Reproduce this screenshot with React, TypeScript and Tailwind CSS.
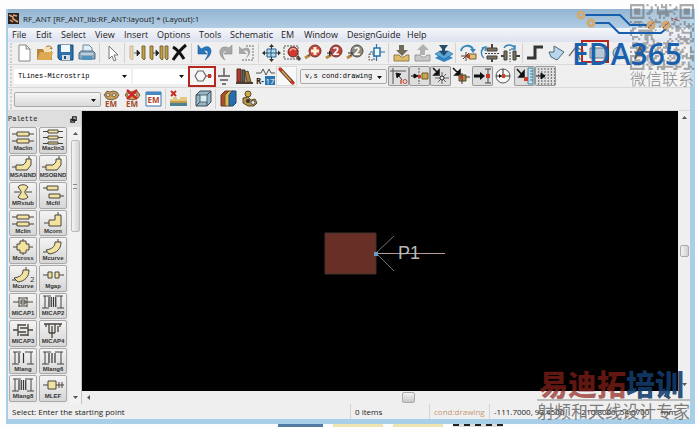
import type { ReactNode } from "react";
import clsx from "clsx";

interface IconItem {
  name: string;
  icon: ReactNode;
}

const menus = [
  { name: "File", width: "w-6" },
  { name: "Edit", width: "w-[25px]" },
  { name: "Select", width: "w-[34px]" },
  { name: "View", width: "w-[29px]" },
  { name: "Insert", width: "w-[33px]" },
  { name: "Options", width: "w-[42px]" },
  { name: "Tools", width: "w-[31px]" },
  { name: "Schematic", width: "w-[51px]" },
  { name: "EM", width: "w-[23px]" },
  { name: "Window", width: "w-[43px]" },
  { name: "DesignGuide", width: "w-[60px]" },
  { name: "Help", width: "w-6" },
];

const magnifier = (
  <>
    <path d="M7 12L2 15" stroke="#b98a3e" strokeWidth="3" />
    <path d="M8 11L5 13" stroke="#444" />
  </>
);

const gear = (
  <g fill="#c99f58" stroke="#5b4a2c" strokeWidth="0.8">
    <path d="M3 6l3-4 3 1 3-1 4 1 2 3-2 3-5 2-5-1z" />
    <ellipse cx="7" cy="6" rx="2" ry="1.4" fill="#eee" />
    <ellipse cx="13" cy="6" rx="2" ry="1.4" fill="#eee" />
  </g>
);

const emText = (
  <text x="10" y="18" textAnchor="middle" fontSize="8" fontWeight="bold" fill="#a34a2a">
    EM
  </text>
);

const mainTools: IconItem[][] = [
  [
    { name: "New", icon: <path d="M5 2h7l4 4v12H5zM12 2v4h4" fill="#fff" stroke="#888" /> },
    {
      name: "Open",
      icon: (
        <>
          <path d="M2 6h6l1 2h8v9H2z" fill="#b98239" />
          <path d="M9 4h7v7H9z" fill="#f3e2b5" />
          <path d="M2 17l3-8h13l-2 8z" fill="#dda955" />
          <path d="M11 4c2-2 6-1 6 2l-2-1" fill="none" stroke="#a5662a" />
        </>
      ),
    },
    {
      name: "Save",
      icon: (
        <>
          <path d="M2 2h15v15H4l-2-2z" fill="#2d72ac" stroke="#164a79" />
          <path d="M5 2h9v7H5z" fill="#f5f8fb" />
          <path d="M6 12h8v5H6z" fill="#d8dee3" />
          <path d="M8 13h2v3H8z" fill="#284d70" />
        </>
      ),
    },
    {
      name: "Print",
      icon: (
        <>
          <path d="M6 2h6l3 3v5H6z" fill="#e3eff7" stroke="#71899b" />
          <path d="M2 10l2-2h12l2 2v6H2z" fill="#8ea9bd" stroke="#566d80" />
          <path d="M5 13h10v4H5z" fill="#4f94bc" />
          <path d="M4 11h12" stroke="#edf5fa" />
        </>
      ),
    },
  ],
  [
    { name: "Select", icon: <path d="M7 3v13l3-3 2 5 2-1-2-5h4z" fill="#fff" stroke="#777" /> },
  ],
  [
    {
      name: "Move edge",
      icon: (
        <>
          <path d="M3 3h3v13l-1 1-2-2z" fill="#e9d7b2" stroke="#b7a98a" strokeWidth="0.8" />
          <path d="M15 3h3v13l-1 1-2-2z" fill="#c4a044" stroke="#655326" strokeWidth="0.8" />
          <path d="M7 10h3M10 7l3 3-3 3z" fill="#222" stroke="#222" strokeWidth="0.7" />
        </>
      ),
    },
    {
      name: "Copy",
      icon: (
        <>
          <path d="M2 3h3v13l-1 1-2-2zM12 3h3v13l-1 1-2-2zM17 3h3v13l-1 1-2-2z" fill="#c4a044" stroke="#655326" strokeWidth="0.8" />
          <path d="M5 10h3M8 7l3 3-3 3z" fill="#222" stroke="#222" strokeWidth="0.7" />
        </>
      ),
    },
    { name: "Delete", icon: <path d="M4 4c5 3 8 7 11 12M17 2C12 6 8 11 4 17" stroke="#111" strokeWidth="3" fill="none" /> },
  ],
  [
    { name: "Undo", icon: <path d="M4 2v9h9l-3-3c4-2 6 3 1 9 9-6 7-15 0-13L7 6z" fill="#2576bd" stroke="#1b5c98" strokeWidth="0.6" /> },
    { name: "Redo", icon: <path d="M17 2v9H9l3-3C8 7 6 11 10 17 2 12 4 3 11 4l3 1z" fill="#a9a9a9" stroke="#8c8c8c" strokeWidth="0.6" /> },
    {
      name: "Undo all",
      icon: (
        <>
          <path d="M3 3v8h8L8 8c4-2 6 3 1 8 8-5 6-13 0-11L6 6z" fill="#a6a6a6" />
          <path d="M10 3h7v14H5" fill="none" stroke="#999" strokeWidth="1.4" strokeDasharray="2 1" />
        </>
      ),
    },
  ],
  [
    {
      name: "View all",
      icon: (
        <>
          <path d="M6 6h9v8H6z" fill="#b7d9ec" stroke="#245f8b" />
          <path d="M10 6v8M6 10h9" stroke="#245f8b" />
          <path d="M10.500 1l2.500 3H8zM10.500 19l2.500-3H8zM1 10l3-2.500v5zM20 10l-3-2.500v5z" fill="#333" />
          <path d="M10.500 3v3M10.500 14v3M3 10h3M15 10h3" stroke="#333" />
        </>
      ),
    },
    {
      name: "Zoom area",
      icon: (
        <>
          <path d="M2 3h14v13H2z" fill="none" stroke="#555" strokeDasharray="2 1" />
          <circle cx="11" cy="9" r="5" fill="#cf392e" stroke="#672822" />
          <path d="M8 8c1-3 4-3 6-1" stroke="#f4b1a2" strokeWidth="1.5" fill="none" />
          <path d="M15 13l3 4" stroke="#594c42" strokeWidth="3" />
        </>
      ),
    },
    {
      name: "Zoom in",
      icon: (
        <>
          {magnifier}
          <circle cx="12" cy="8" r="6" fill="#c7463d" stroke="#72352f" />
          <path d="M12 4v8M8 8h8" stroke="#fff2d5" strokeWidth="3" />
        </>
      ),
    },
    {
      name: "Zoom in 2x",
      icon: (
        <>
          {magnifier}
          <circle cx="12" cy="8" r="6" fill="#b34642" stroke="#72352f" />
          <text x="12" y="12" textAnchor="middle" fontSize="11" fontWeight="bold" fill="#fff">2</text>
          <path d="M3 10h5M5.500 8v4" stroke="#222" />
        </>
      ),
    },
    {
      name: "Zoom out 2x",
      icon: (
        <>
          {magnifier}
          <circle cx="12" cy="8" r="6" fill="#8e8d7d" stroke="#4c4c45" />
          <text x="12" y="12" textAnchor="middle" fontSize="11" fontWeight="bold" fill="#fff">2</text>
          <path d="M3 10h5" stroke="#222" />
        </>
      ),
    },
    {
      name: "Pan",
      icon: (
        <>
          <path d="M3 11h5v6H3z" fill="none" stroke="#555" strokeDasharray="2 1" />
          <path d="M10.500 1v17M4 9h15" stroke="#2974a8" strokeWidth="1.2" />
          <path d="M8 5h6v8H8z" fill="#eef7fc" stroke="#2974a8" strokeWidth="1.5" />
        </>
      ),
    },
  ],
  [
    {
      name: "Push in",
      icon: (
        <>
          <path d="M3 12h5l2 2h3l2-2h3v6H3z" fill="#dfbd68" stroke="#7e6835" strokeWidth="0.8" />
          <path d="M8 2h5v5h4l-6 6-6-6h3z" fill="#716b5a" />
        </>
      ),
    },
    {
      name: "Pop out",
      icon: (
        <>
          <path d="M8 12h5V7h4l-6-6-6 6h3z" fill="#b1b1b1" />
          <path d="M3 12h5l2 2h3l2-2h3v6H3z" fill="#c8c8c8" stroke="#8c8c8c" strokeWidth="0.8" />
        </>
      ),
    },
    {
      name: "Layers",
      icon: (
        <>
          <path d="M2 15l5-3h8l5 3-9 4z" fill="#3385c6" />
          <path d="M2 11l5-3h8l5 3-9 5z" fill="#5da6da" stroke="#286d9f" strokeWidth="0.7" />
          <path d="M6 2h9l-3 4v2h3l-4 5-5-5h3V6z" fill="#254d6d" />
        </>
      ),
    },
  ],
  [
    {
      name: "Rotate",
      icon: (
        <>
          <path d="M3 8C4 2 12 1 15 6" fill="none" stroke="#3787bb" strokeWidth="2" />
          <path d="M12 6h6l-3 4z" fill="#3787bb" />
          <path d="M3 13h7M8 9v9M5 16l6-6" stroke="#4b4030" />
          <path d="M11 11h7v5h-7z" fill="#dec078" stroke="#74602f" />
          <path d="M9 12h3v3H9z" fill="#c63a27" />
        </>
      ),
    },
    {
      name: "Mirror vertical",
      icon: (
        <>
          <path d="M5 5C1 7 2 13 5 15M3 5l4-1-1 4" fill="none" stroke="#3787bb" strokeWidth="1.4" />
          <path d="M8 5h10v3H8zM8 13h10v3H8z" fill="#777263" stroke="#454138" />
          <path d="M13 1v4M13 16v3" stroke="#444" strokeWidth="2" />
          <path d="M6 10.500h14" stroke="#444" strokeDasharray="2 1" />
        </>
      ),
    },
    {
      name: "Mirror horizontal",
      icon: (
        <>
          <path d="M4 5c2-4 8-4 11 0M15 2v4h-4" fill="none" stroke="#3787bb" strokeWidth="1.4" />
          <path d="M4 8h3v9H4zM13 8h3v9h-3z" fill="#777263" stroke="#454138" />
          <path d="M1 13h3M16 13h4" stroke="#444" strokeWidth="2" />
          <path d="M10 6v13" stroke="#444" strokeDasharray="2 1" />
        </>
      ),
    },
  ],
  [
    { name: "Trace", icon: <path d="M2 15h8V4h8" fill="none" stroke="#353535" strokeWidth="3" /> },
    { name: "Polygon", icon: <path d="M3 9h5V3l10 6-7 8-6-3z" fill="#b8d7ed" stroke="#4f6779" /> },
    { name: "Polyline", icon: <path d="M2 13l7-9 7 4-5 3 2 6" fill="none" stroke="#777" strokeWidth="1.4" /> },
    { name: "Rectangle", icon: <path d="M2 5h15v10H2z" fill="#b7c9d5" stroke="#6d7b84" /> },
    { name: "Circle", icon: <circle cx="10" cy="10" r="6" fill="#b9cfdf" stroke="#5c6b76" /> },
    { name: "Text", icon: <path d="M5 16l5-12 5 12M7 12h6" fill="none" stroke="#333" strokeWidth="2" /> },
  ],
];

const snapTools: (IconItem & { pressed: boolean })[] = [
  {
    name: "Snap origin",
    pressed: true,
    icon: (
      <>
        <path d="M2 5h16M5 2v16" stroke="#555" />
        <path d="M8 7l5 1-4 4zM11 10l3 4" fill="#111" stroke="#111" strokeWidth="0.8" />
        <path d="M13 14v4" stroke="#c9482c" strokeWidth="1.4" />
        <circle cx="17" cy="15.500" r="2" fill="none" stroke="#c9482c" />
      </>
    ),
  },
  {
    name: "Snap to pin",
    pressed: true,
    icon: (
      <>
        <path d="M10 2v16" stroke="#555" strokeDasharray="2 1" />
        <path d="M2 10h4M5 8l4 2-4 2z" fill="#111" stroke="#111" />
        <path d="M13 7h6v6h-6z" fill="#c5a84d" stroke="#6d5a23" />
        <path d="M9 9h3v3H9z" fill="#d43c26" />
      </>
    ),
  },
  {
    name: "Snap to vertex",
    pressed: true,
    icon: (
      <>
        <path d="M3 2l5 5M9 4v5H4z" fill="#111" stroke="#111" strokeWidth="1.5" />
        <path d="M12 6v12M5 12h14M8 16l8-8M8 8l8 8" stroke="#444" strokeWidth="0.8" />
        <circle cx="12" cy="12" r="2" fill="#fff" stroke="#222" />
      </>
    ),
  },
  {
    name: "Snap to center",
    pressed: false,
    icon: (
      <>
        <path d="M2 2l6 6M9 4v5H4z" fill="#111" stroke="#111" strokeWidth="1.5" />
        <path d="M8 9h7v6H8z" fill="#a58b45" stroke="#564923" />
        <path d="M11 7v11M15 11h4" stroke="#333" />
        <path d="M9 10h3v3H9z" fill="#c73928" />
      </>
    ),
  },
  {
    name: "Snap to edge",
    pressed: true,
    icon: (
      <>
        <path d="M2 10h7" stroke="#111" strokeWidth="3" />
        <path d="M8 6l5 4-5 4z" fill="#111" />
        <path d="M16 3v14M13 3h6M13 17h6" stroke="#444" />
        <path d="M14 8h4v4h-4z" fill="#c73928" />
      </>
    ),
  },
  {
    name: "Snap to circle",
    pressed: false,
    icon: (
      <>
        <circle cx="10" cy="10" r="7" fill="#f7f7f7" stroke="#555" />
        <path d="M10 3v8M3 10h14" stroke="#333" />
        <path d="M9 8h3v4H9z" fill="#d43c26" />
        <path d="M6 8l3 2-3 2z" fill="#111" />
      </>
    ),
  },
  {
    name: "Snap to ruler",
    pressed: true,
    icon: (
      <>
        <path d="M14 2h5v16h-5z" fill="#c6e1ed" stroke="#4285a5" />
        <path d="M16 5h3M16 8h3M16 11h3M16 14h3" stroke="#34799d" />
        <path d="M3 3l6 7M10 5v6H5z" fill="#111" stroke="#111" strokeWidth="1.5" />
        <path d="M10 11h4v4h-4z" fill="#d43c26" />
      </>
    ),
  },
  {
    name: "Snap to grid",
    pressed: true,
    icon: (
      <>
        {[3, 6, 9, 12, 15, 18].map((y) => (
          <path key={y} d={`M3 ${y}H20`} stroke="#222" strokeWidth="1.2" strokeDasharray="1.2 2" />
        ))}
        <path d="M1 10h6M6 7l4 3-4 3z" fill="#111" stroke="#111" />
      </>
    ),
  },
];

const emTools: IconItem[] = [
  { name: "EM setup", icon: <>{gear}{emText}</> },
  {
    name: "EM stop",
    icon: (
      <>
        {gear}
        <path d="M5 1l10 9M15 1L5 10" stroke="#d12724" strokeWidth="2.4" />
        {emText}
      </>
    ),
  },
  {
    name: "EM window",
    icon: (
      <>
        <path d="M3 3h15v14H3z" fill="#fff" stroke="#3975a8" />
        <path d="M3 3h15v3H3z" fill="#4588c2" />
        <text x="10.500" y="14" textAnchor="middle" fontSize="8" fontWeight="bold" fill="#b04425">EM</text>
      </>
    ),
  },
  {
    name: "Substrate",
    icon: (
      <>
        <path d="M2 10h3V8h4v2h3V8h7v6H2z" fill="#e2ca83" />
        <path d="M2 13h17v4H2z" fill="#4b8394" />
        <path d="M2 12h17v2H2z" fill="#c09d4d" />
        <path d="M3 2l5 5M8 2L3 7" stroke="#c63022" strokeWidth="2" />
      </>
    ),
  },
  {
    name: "3D view",
    icon: (
      <>
        <path d="M3 6l4-4h11v11l-4 4H3z" fill="#93b7c9" stroke="#414d53" />
        <path d="M7 6h7v7H7z" fill="#d9edf5" stroke="#52666f" />
        <path d="M3 6h4M14 6l4-4M14 13v4M3 17l4-4" stroke="#414d53" />
      </>
    ),
  },
  {
    name: "Layer stack",
    icon: (
      <>
        <path d="M3 6l4-4h4v12l-3 3H3z" fill="#ad4e2b" stroke="#5c3b2b" />
        <path d="M7 6l4-4h4v12l-3 3H7z" fill="#e1b94f" stroke="#6c542d" />
        <path d="M11 6l3-4h4v12l-3 3h-4z" fill="#236eae" stroke="#244967" />
      </>
    ),
  },
  {
    name: "Options",
    icon: (
      <>
        <circle cx="9" cy="5" r="3" fill="#cfaa4e" stroke="#5f4a22" />
        <path d="M4 9l5-1 3 3 4-1 2 4-3 3H9l-5-3z" fill="#b8934a" stroke="#5f4a22" />
        <circle cx="9" cy="12" r="2" fill="#333" />
        <circle cx="14" cy="13.500" r="2" fill="#eee" stroke="#555" />
      </>
    ),
  },
];

const combs = (count: number) =>
  Array.from({ length: count }, (_, i) => (
    <path key={i} d={`M${9 + (i * 9) / count} 3V13`} stroke="#333" strokeWidth="1.2" />
  ));

const combFrame = <path d="M3 2h8M5 2v12M2 14h7M15 2h8M21 2v12M17 14h7" stroke="#444" fill="none" />;

const coupledLines = (
  <>
    <path d="M2 5h22M2 12h22" />
    <path d="M7 3h12v4H7zM7 10h12v4H7z" />
  </>
);

const bend = (
  <>
    <path d="M2 11h4M19 0v3" />
    <path d="M16 3h5v6l-4 5H6V9h7l3-3z" />
  </>
);

const palette: { label: string; icon: ReactNode }[] = [
  { label: "Maclin", icon: coupledLines },
  {
    label: "Maclin3",
    icon: (
      <>
        <path d="M3 2.500h20M3 8.500h20M3 14.500h20" />
        <path d="M8 1h10v3H8zM8 7h10v3H8zM8 13h10v2H8z" />
      </>
    ),
  },
  { label: "MSABND", icon: bend },
  { label: "MSOBND", icon: bend },
  {
    label: "MRstub",
    icon: (
      <>
        <path d="M4 8h6M16 8h6" />
        <path d="M8 3c2-3 8-3 10 0l-3 4v2l3 4c-2 3-8 3-10 0l3-4V7z" />
      </>
    ),
  },
  {
    label: "Mcfil",
    icon: (
      <>
        <path d="M3 4h4M19 12h5" />
        <path d="M7 2h11v4H7zM9 10h11v4H9z" />
      </>
    ),
  },
  { label: "Mclin", icon: coupledLines },
  {
    label: "Mcorn",
    icon: (
      <>
        <path d="M4 11h5M18 0v3" />
        <path d="M15 3h6v11H9V8h6z" />
      </>
    ),
  },
  {
    label: "Mcross",
    icon: (
      <>
        <path d="M3 8h20M13 0v16" />
        <path d="M10 2h6v3h3v6h-3v3h-6v-3H7V5h3z" />
      </>
    ),
  },
  {
    label: "Mcurve",
    icon: (
      <>
        <path d="M3 13h4M18 0v4" />
        <path d="M15 3h6c0 7-4 11-12 12l-3-4c6-1 9-3 9-8z" />
      </>
    ),
  },
  {
    label: "Mcurve",
    icon: (
      <>
        <path d="M2 13h4M16 0v4" />
        <path d="M13 3h6c0 7-4 11-11 12l-4-4c6-1 9-3 9-8z" />
        <text x="20" y="15" fontSize="8" fill="#333" stroke="none">2</text>
      </>
    ),
  },
  {
    label: "Mgap",
    icon: (
      <>
        <path d="M3 8h5M19 8h5" />
        <path d="M8 5h4v6H8zM15 5h4v6h-4z" />
      </>
    ),
  },
  { label: "MICAP1", icon: <path d="M3 8h6M17 8h6M9 4h8M9 12h8M9 3v10M17 3v10M11 8h6M11 6h4v4h-4z" fill="none" /> },
  { label: "MICAP2", icon: <>{combFrame}{combs(4)}</> },
  { label: "MICAP3", icon: <path d="M3 8h5M18 8h5M8 2v12M18 2v12M8 3h8M10 6h8M8 10h8M10 13h8" fill="none" strokeWidth="1.300" /> },
  { label: "MICAP4", icon: <path d="M4 2h18M6 2v3M20 2v3M9 2v9M12 4v9M15 2v9M18 4v6M9 11h6M12 13v3" fill="none" strokeWidth="1.300" /> },
  { label: "Mlang", icon: <>{combFrame}{combs(2)}</> },
  { label: "Mlang6", icon: <>{combFrame}{combs(3)}</> },
  { label: "Mlang8", icon: <>{combFrame}{combs(4)}</> },
  {
    label: "MLEF",
    icon: (
      <>
        <path d="M3 8h21M19 5v6M22 5v6" />
        <path d="M8 4h8v8H8z" />
      </>
    ),
  },
];

const QR_SIZE = 31;

const isFinder = (x: number, y: number) =>
  (x < 8 && y < 8) || (x > QR_SIZE - 9 && y < 8) || (x < 8 && y > QR_SIZE - 9);

const isFilled = (x: number, y: number) => {
  const n = Math.sin(x * 12.9898 + y * 78.233) * 43758.5453;
  return n - Math.floor(n) < 0.5;
};

const qrPath = Array.from({ length: QR_SIZE * QR_SIZE }, (_, i) => {
  const x = i % QR_SIZE;
  const y = Math.floor(i / QR_SIZE);
  return isFilled(x, y) && !isFinder(x, y) ? `M${x} ${y}h1v1h-1z` : "";
}).join("");

const Icon = ({ children }: { children: ReactNode }) => (
  <svg className="h-5 w-[21px]" viewBox="0 0 21 20" fill="none" aria-hidden="true">
    {children}
  </svg>
);

const ToolButton = ({ name, icon }: IconItem) => (
  <button type="button" aria-label={name} className="h-5 w-[21px] shrink-0">
    <Icon>{icon}</Icon>
  </button>
);

const Grip = () => <div className="mx-0.5 h-5 w-0 shrink-0 border-l-2 border-dotted border-[#d0d0d0]" />;

const Divider = () => <div className="ml-px mr-0.5 h-5 w-px shrink-0 bg-[#d2d2d2]" />;

const Dropdown = ({ label, value, className }: { label: string; value: string; className: string }) => (
  <div className={clsx("relative h-[15px] shrink-0", className)}>
    <select
      aria-label={label}
      className="block h-full w-full appearance-none bg-transparent pl-1 font-['Liberation_Mono',monospace] text-[7px] leading-3 text-black outline-none"
    >
      <option>{value}</option>
    </select>
    <svg className="pointer-events-none absolute right-1 top-[6px] h-[3px] w-[5px]" viewBox="0 0 5 3">
      <path d="M0 0h5L2.500 3z" fill="#111" />
    </svg>
  </div>
);

const Arrow = ({ d }: { d: string }) => (
  <svg className="h-[5px] w-[5px] shrink-0" viewBox="0 0 5 5" aria-hidden="true">
    <path d={d} fill="#555" />
  </svg>
);

const Toolbars = () => (
  <div className="bg-[#efefef]">
    <div className="flex h-[23px] items-center overflow-hidden border-b border-[#d9d9d9]">
      <Grip />
      {mainTools.map((group, i) => (
        <div key={i} className="flex items-center">
          {i > 0 && <Divider />}
          {group.map((tool) => (
            <ToolButton key={tool.name} {...tool} />
          ))}
        </div>
      ))}
    </div>
    <div className="flex h-[23px] items-center overflow-hidden border-b border-[#d9d9d9]">
      <Grip />
      <Dropdown label="Palette library" value="TLines-Microstrip" className="w-[117px] bg-white" />
      <Dropdown label="Component" value="" className="ml-0.5 w-[55px] bg-white" />
      <button
        type="button"
        aria-label="Insert port"
        className="flex h-[21px] w-7 shrink-0 items-center justify-center border-2 border-[#b5281f] bg-[#f5f5f5]"
      >
        <svg className="h-4 w-6" viewBox="0 0 24 16" fill="none">
          <path d="M5 8l3-5h5l3 5-3 5H8z" stroke="#666" strokeWidth="1.2" />
          <path d="M16 8h6" stroke="#c0392b" />
          <path d="M18 6h3v4h-3z" fill="#c0392b" />
        </svg>
      </button>
      <button type="button" aria-label="Insert ground" className="h-5 w-[18px] shrink-0">
        <svg className="h-5 w-[18px]" viewBox="0 0 18 20" fill="none">
          <path d="M8 2v8M2 10h12M4 14h8M6 18h4" stroke="#555" strokeWidth="1.4" />
        </svg>
      </button>
      <ToolButton
        name="Library"
        icon={
          <>
            <path d="M3 3h4v13H3z" fill="#ad3a2c" stroke="#5a281f" />
            <path d="M8 4h3v12H8z" fill="#5d6157" stroke="#333" />
            <path d="M11 6l3-1 3 11h-4z" fill="#ad7d39" stroke="#5c4829" />
            <path d="M2 17h17" stroke="#4b3f32" strokeWidth="2" />
          </>
        }
      />
      <ToolButton
        name="Name"
        icon={
          <>
            <path d="M1 7h5l2-4 3 6 3-6 2 4h4" stroke="#555" />
            <path d="M10 10h10v9H10z" fill="#2c75b1" />
            <text x="1" y="18" fontSize="8" fontWeight="bold" fill="#222">R-</text>
            <text x="15" y="18" textAnchor="middle" fontSize="8" fill="#fff">17</text>
          </>
        }
      />
      <button type="button" aria-label="Wire" className="h-5 w-[21px] shrink-0 border border-[#d8d8d8] bg-[#f8f8f8]">
        <svg className="h-[18px] w-[19px]" viewBox="0 0 19 18" fill="none">
          <path d="M3 2l13 14" stroke="#6c3c25" strokeWidth="3.500" />
          <path d="M4 3l10 11" stroke="#d7a65e" strokeWidth="1.500" />
          <path d="M2 1l3 3M14 14l3 3" stroke="#c5382a" strokeWidth="3" />
        </svg>
      </button>
      <Dropdown
        label="Active layer"
        value="v,s cond:drawing"
        className="ml-[3px] mr-px w-[87px] rounded-xs border border-[#aaa] bg-[#f1f1f1]"
      />
      {snapTools.map((tool) => (
        <button
          key={tool.name}
          type="button"
          aria-label={tool.name}
          aria-pressed={tool.pressed}
          className={clsx("h-5 w-[21px] shrink-0 rounded-xs", tool.pressed && "bg-[#dedede] ring-1 ring-[#999] ring-inset")}
        >
          <Icon>{tool.icon}</Icon>
        </button>
      ))}
    </div>
    <div className="flex h-[23px] items-center overflow-hidden border-b border-[#d9d9d9]">
      <Grip />
      <Dropdown
        label="EM setup"
        value=""
        className="w-[87px] rounded-xs border border-[#aaa] bg-linear-to-b from-[#f6f6f6] to-[#dadada]"
      />
      {emTools.map((tool, i) => (
        <div key={tool.name} className="flex items-center">
          {i > 2 && i < 6 && <Divider />}
          <ToolButton {...tool} />
        </div>
      ))}
    </div>
  </div>
);

const Palette = () => (
  <aside className="flex w-[74px] shrink-0 flex-col border-r border-[#c4c4c4] bg-[#ececec]">
    <div className="flex h-4 items-center justify-between bg-[#dedede] pr-1">
      <h2 className="font-['Liberation_Mono',monospace] text-[7px] leading-3">Palette</h2>
      <button type="button" aria-label="Float palette">
        <svg className="h-[7px] w-[7px]" viewBox="0 0 8 8" fill="#eee" stroke="#222" strokeWidth="1.500">
          <path d="M3 1h4v4H3zM1 4h4v3H1z" />
        </svg>
      </button>
    </div>
    <div className="flex grow">
      <div className="grid w-[59px] grid-cols-2 grid-rows-10 gap-x-0.5 gap-y-px pb-0.5 pl-px">
        {palette.map(({ label, icon }, i) => (
          <button
            key={i}
            type="button"
            className="flex flex-col items-center justify-center overflow-hidden rounded-xs border border-[#a9a9a9] bg-linear-to-b from-[#f4f4f4] to-[#d6d6d6]"
          >
            <svg className="h-4 w-[26px]" viewBox="0 0 26 16" fill="#f3e3a0" stroke="#4a453c" aria-hidden="true">
              {icon}
            </svg>
            <span className="font-['Liberation_Sans',sans-serif] text-[6px] leading-[7px] font-bold text-[#333]">{label}</span>
          </button>
        ))}
      </div>
      <div className="ml-0.5 flex grow flex-col items-center bg-[#f2f2f2] py-1">
        <Arrow d="M0 4h5L2.500 1z" />
        <div className="mt-1 flex h-[92px] w-[9px] items-center justify-center rounded-xs border border-[#bbb] bg-linear-to-r from-[#f4f4f4] to-[#d4d4d4]">
          <div className="h-[5px] w-1 border-y border-[#888]" />
        </div>
        <div className="grow" />
        <Arrow d="M0 1h5L2.500 4z" />
      </div>
    </div>
  </aside>
);

const LayoutCanvas = () => (
  <main className="flex grow flex-col">
    <div className="flex grow">
      <div className="flex grow items-center justify-center bg-black">
        <svg className="h-12 w-[130px]" viewBox="0 0 130 48" fill="none" role="img" aria-label="Port P1">
          <path d="M10 6h51v41H10z" fill="#672f26" stroke="#40332f" />
          <path d="M79 9L61 26l18 18" stroke="#747474" />
          <path d="M61 26.500h69" stroke="#b59d97" />
          <path d="M59 25h4v4h-4z" fill="#669dc1" />
          <text x="83" y="32" fontSize="18" fill="#b8b8b8" className="font-['Liberation_Sans',sans-serif]">P1</text>
        </svg>
      </div>
      <div className="flex w-3 shrink-0 flex-col items-center justify-between bg-[#efefef] py-1">
        <Arrow d="M0 4h5L2.500 1z" />
        <div className="h-3 w-[9px] rounded-xs border border-[#aaa] bg-linear-to-r from-[#f4f4f4] to-[#d0d0d0]" />
        <Arrow d="M0 1h5L2.500 4z" />
      </div>
    </div>
    <div className="flex h-[13px] items-center justify-between bg-[#efefef] pl-1 pr-[18px]">
      <Arrow d="M4 0v5L1 2.500z" />
      <div className="ml-[58px] h-[11px] w-[13px] rounded-xs border border-[#aaa] bg-linear-to-b from-[#f4f4f4] to-[#c8c8c8]" />
      <Arrow d="M1 0v5l3-2.500z" />
    </div>
  </main>
);

const StatusBar = () => (
  <footer className="flex h-[15px] items-center bg-[#efefef] pl-1 text-[8px] leading-[15px] whitespace-nowrap text-[#222]">
    <span className="grow">Select: Enter the starting point</span>
    <span className="w-[79px] border-l border-[#d4d4d4] pl-1">0 items</span>
    <span className="w-[60px] border-l border-[#d4d4d4] pl-1 text-[#c39a74]">cond:drawing</span>
    <span className="w-[86px] border-l border-[#d4d4d4] pl-1">-111.7000, 93.4500</span>
    <span className="w-[86px] pl-1">-210.8000, 54.0700</span>
    <span className="w-[29px]">mm</span>
  </footer>
);

const Brand = () => (
  <div className="pointer-events-none absolute top-1 right-1 h-[82px] w-[122px]">
    <div className="absolute top-0 right-0 w-16 text-[#8b8b8b]">
      <svg className="h-[66px] w-16 bg-white/30 opacity-60" viewBox="0 0 31 31" preserveAspectRatio="none" fill="#777">
        <path d={qrPath} />
        <path d="M.5 .5h6v6h-6zM24.500 .5h6v6h-6zM.5 24.500h6v6h-6z" fill="none" stroke="#777" />
        <path d="M2 2h3v3H2zM26 2h3v3h-3zM2 26h3v3H2z" />
        <ellipse cx="15" cy="15" rx="4" ry="3" fill="#e8eef3" />
      </svg>
      <p className="bg-white/30 font-['Noto_Sans_CJK_SC',sans-serif] text-base leading-4 font-light">微信联系</p>
    </div>
    <svg className="absolute top-1.5 left-0 h-[60px] w-[122px]" viewBox="0 0 122 60" fill="none">
      <path d="M13 5h35l10 10h18M23 13h14l10 10h42l6-5" stroke="#175fad" strokeWidth="2" />
      <g stroke="#d0aa70" strokeWidth="3">
        <circle cx="9" cy="5" r="3" />
        <circle cx="19" cy="13" r="3" />
        <circle cx="79" cy="15" r="3" />
        <circle cx="94" cy="15" r="3" />
      </g>
      <g stroke="#b5281f" strokeWidth="2">
        <path d="M10 31h26v21H10z" />
        <path d="M76 18l6-6M91 18l6-6M99 8l9 3" strokeWidth="1" strokeDasharray="2 1" />
      </g>
    </svg>
    <p className="absolute top-[35px] left-0 font-['Open_Sans',sans-serif] text-[30px] leading-[30px] font-semibold text-[#1a60ad]">
      EDA365
    </p>
  </div>
);

const TrainingMark = () => (
  <div className="pointer-events-none absolute right-2 bottom-1.5 font-['Noto_Sans_CJK_SC',sans-serif] whitespace-nowrap">
    <p className="border-b-2 border-[#999]/60 px-0.5 text-[29px] leading-8 font-black text-[#8d2019]/70">
      易迪拓<span className="text-[#123c6c]/90">培训</span>
    </p>
    <p className="text-[17px] leading-5 text-[#555]/75">射频和天线设计专家</p>
  </div>
);

export default function App() {
  return (
    <div className="relative flex min-h-screen flex-col overflow-hidden bg-[#fdfdfd] pt-[9px] pr-[3px] pl-1.5 font-['Open_Sans','Noto_Sans',sans-serif] text-[#222]">
      <div className="flex grow flex-col border-r-[5px] border-b-[5px] border-l-2 border-[#a9cfe8]">
        <header className="flex h-[19px] items-center gap-1 bg-linear-to-b from-[#93b5d2] to-[#b2cde3] text-[8px] leading-[19px]">
          <svg className="h-[11px] w-[11px]" viewBox="0 0 11 11">
            <path d="M0 0h11v11H0z" fill="#30231d" />
            <path d="M1 2l4 2v2l5 3M5 2l4 1M2 7l3 2" stroke="#dfa481" strokeWidth="1.5" fill="none" />
          </svg>
          <h1>RF_ANT [RF_ANT_lib:RF_ANT:layout] * (Layout):1</h1>
        </header>
        <nav className="flex h-[14px] items-center bg-linear-to-b from-[#f6f7fb] to-[#dce1ef] pl-1 text-[9px] leading-[14px]">
          {menus.map(({ name, width }) => (
            <button key={name} type="button" className={clsx("shrink-0 text-left", width)}>
              {name}
            </button>
          ))}
        </nav>
        <Toolbars />
        <div className="flex grow">
          <Palette />
          <LayoutCanvas />
        </div>
        <StatusBar />
      </div>
      <div className="flex h-[3px] gap-2.5 pl-[272px]">
        <div className="w-[45px] bg-[#527ba3]" />
        <div className="w-[50px] bg-[#efe3b0]" />
        <div className="w-[50px] bg-[#efe3b0]" />
        <div className="w-[50px] border-t-2 border-dashed border-[#222] bg-[#ddd]" />
      </div>
      <Brand />
      <TrainingMark />
    </div>
  );
}
